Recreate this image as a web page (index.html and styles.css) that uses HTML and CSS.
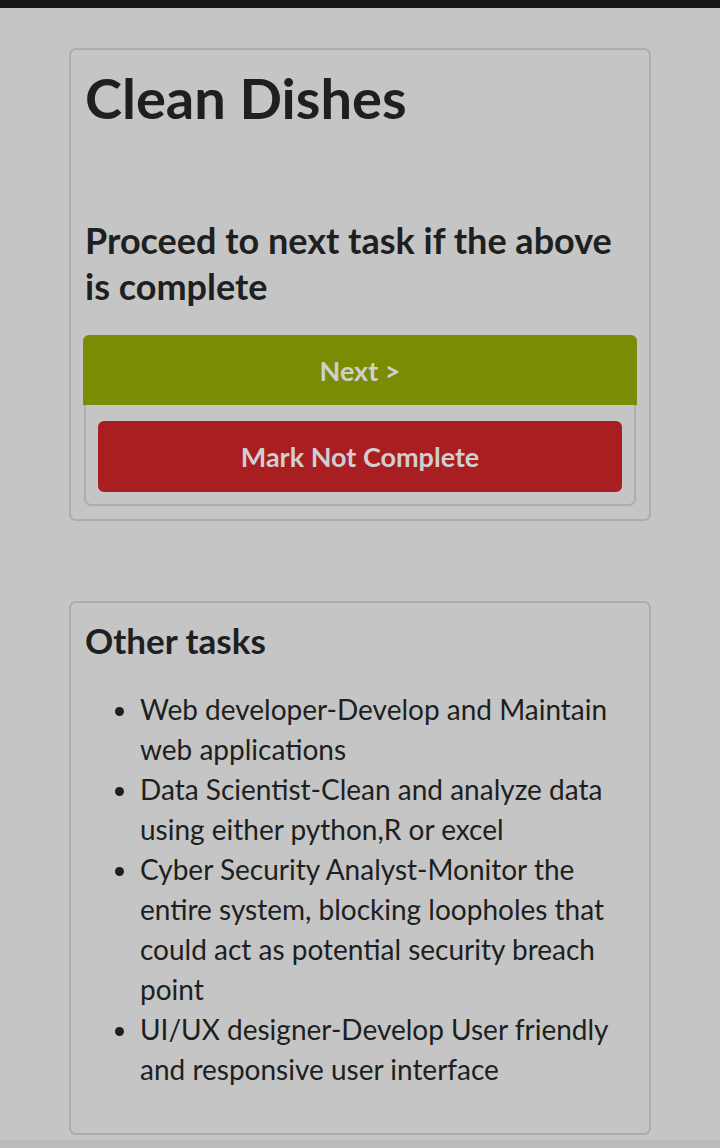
FILE: index.html
```html
<!DOCTYPE html>
<html>
<head>
<meta charset="utf-8">
<link rel="stylesheet" href="styles.css">
</head>
<body>
<div class="topbar"></div>
<main class="page">
  <section class="card task-card">
    <h1 class="task-title">Clean Dishes</h1>
    <p class="prompt">Proceed to next task if the above is complete</p>
    <button class="btn btn-next">Next &gt;</button>
    <div class="sub-box">
      <button class="btn btn-undo">Mark Not Complete</button>
    </div>
  </section>
  <section class="card other-card">
    <h2 class="other-title">Other tasks</h2>
    <ul class="task-list">
      <li>Web developer-Develop and Maintain web applications</li>
      <li>Data Scientist-Clean and analyze data using either python,R or excel</li>
      <li>Cyber Security Analyst-Monitor the entire system, blocking loopholes that could act as potential security breach point</li>
      <li>UI/UX designer-Develop User friendly and responsive user interface</li>
    </ul>
  </section>
</main>
<div class="bottombar"></div>
</body>
</html>
```
FILE: styles.css
```css
* { box-sizing: border-box; }
html, body { margin: 0; padding: 0; }
body {
  background: #c5c5c5;
  font-family: Lato, "Open Sans", sans-serif;
  color: #1d1f21;
  height: 1148px;
  overflow: hidden;
  position: relative;
}
.topbar { height: 8px; background: #161616; }
.page {
  padding: 40px 69px 0 69px;
  display: flex;
  flex-direction: column;
  gap: 80px;
}
.card {
  border: 2px solid #adadad;
  border-radius: 7px;
  background: #c5c5c5;
}
.task-card { padding: 13px 12px 13px 12px; height: 473px; }
.task-title {
  margin: 0 0 0 2px;
  font-size: 56px;
  font-weight: 700;
  line-height: 70px;
}
.prompt {
  margin: 84px 0 0 2px;
  font-size: 36px;
  font-weight: 700;
  line-height: 46px;
}
.btn {
  display: block;
  width: 100%;
  border: none;
  font-family: Lato, sans-serif;
  font-weight: 700;
  color: #cfcfcf;
  font-size: 27px;
}
.btn-next {
  margin-top: 26px;
  height: 70px;
  background: #7a8c04;
  border-radius: 6px 6px 0 0;
}
.sub-box {
  margin: 0 1px;
  border: 2px solid #adadad;
  border-top: none;
  border-radius: 0 0 7px 7px;
  padding: 16px 12px 12px 12px;
}
.btn-undo {
  height: 71px;
  background: #a91e20;
  border-radius: 6px;
}
.other-card { padding: 12px 14px 0 12px; height: 534px; }
.other-title {
  margin: 0 0 0 2px;
  font-size: 35px;
  font-weight: 700;
  line-height: 50px;
}
.task-list {
  margin: 24px 0 0 0;
  padding-left: 57px;
  font-size: 28px;
  line-height: 40px;
  font-weight: 400;
}
.bottombar {
  position: absolute;
  left: 0; right: 0; bottom: 0;
  height: 8px;
  background: #bbbbbb;
}
```
